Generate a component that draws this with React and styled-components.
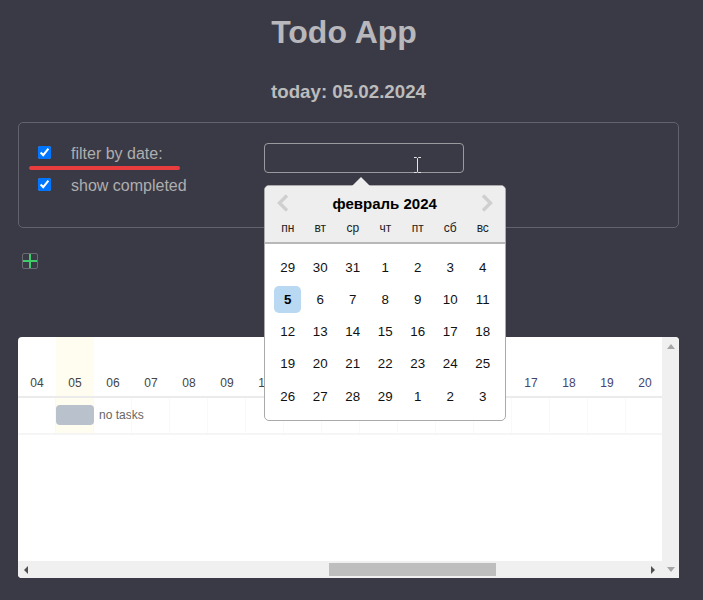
import React from 'react';
import styled, { createGlobalStyle } from 'styled-components';

const Global = createGlobalStyle`
  html, body { margin: 0; padding: 0; background: #3a3a46; }
  body { font-family: "Liberation Sans", Arial, sans-serif; }
`;
const Page = styled.div`
  width: 703px; height: 600px; box-sizing: border-box; overflow: hidden;
  padding: 14px 24px 0 18px; background: #3a3a46;
`;
const Title = styled.h1`
  margin: 0; padding-right: 9px; text-align: center;
  font-size: 32px; line-height: 37px; font-weight: 700; color: #b7b7bc;
`;
const Today = styled.h2`
  margin: 30px 0 0; text-align: center;
  font-size: 18.72px; line-height: 21px; font-weight: 700; color: #bcbcbc;
`;
const FilterPanel = styled.section`
  position: relative; box-sizing: border-box; height: 106px; margin-top: 20px;
  padding: 14px 0 0 19px; border: 1px solid #62626c; border-radius: 5px;
  display: grid; grid-template-columns: 226px 200px; align-items: start;
`;
const Options = styled.div`display: flex; flex-direction: column;`;
const Option = styled.label`
  height: 32px; box-sizing: border-box; padding-top: 2px; display: flex; align-items: center; gap: 20px;
  font-size: 16px; color: #aeaeae;
`;
const Check = styled.input`width: 13px; height: 13px; margin: 0 0 3px; flex: none;`;
const Underline = styled.div`
  position: absolute; left: 10px; top: 43px; width: 151px; height: 4px;
  border-radius: 2px; background: #e83c3f;
`;
const DateField = styled.div`position: relative; margin-top: 6px;`;
const DateInput = styled.input`
  display: block; box-sizing: border-box; width: 200px; height: 30px; padding: 0 8px;
  background: transparent; border: 1px solid #9a9a9e; border-radius: 4px;
`;
const Cursor = styled.svg`position: absolute; left: 150px; top: 14px;`;
const Popup = styled.div`
  position: absolute; z-index: 5; left: 0; top: 42px; width: 242px; height: 236px;
  box-sizing: border-box; border: 1px solid #aaa; border-radius: 5px; background: #fff;
  &::before {
    content: ""; position: absolute; left: 87px; top: -9px;
    border-left: 9px solid transparent; border-right: 9px solid transparent;
    border-bottom: 9px solid #eee;
  }
`;
const PopupHead = styled.div`
  height: 58px; box-sizing: border-box; padding: 6px 7px 0 6.5px; background: #eee;
  border-bottom: 2px solid #b8b8b8; border-radius: 4px 4px 0 0;
`;
const MonthRow = styled.div`
  height: 22px; padding: 0 4px; display: flex; align-items: center; justify-content: space-between;
`;
const Month = styled.div`font-size: 15px; font-weight: 700; color: #000;`;
const WeekRow = styled.div`
  margin-top: 6px; display: grid; grid-template-columns: repeat(7, 32.5px);
`;
const WeekDay = styled.div`
  text-align: center; font-size: 12px; line-height: 16px; color: #222;
`;
const DaysGrid = styled.div`
  padding: 7px 7px 0 6.5px; display: grid;
  grid-template-columns: repeat(7, 32.5px); grid-auto-rows: 32.25px;
`;
const Day = styled.div`
  display: flex; align-items: center; justify-content: center;
  font-size: 13.33px; color: #111;
`;
const Selected = styled.span`
  width: 27px; height: 27px; border-radius: 5px; background: #b9d8f2;
  display: flex; align-items: center; justify-content: center;
  font-weight: 700; color: #000;
`;
const AddButton = styled.button`
  display: block; box-sizing: border-box; width: 16px; height: 16px; margin: 25px 0 0 4px;
  padding: 0; background: transparent; border: 1px solid #6a6a72; border-radius: 2px;
`;
const Timeline = styled.section`
  margin-top: 68px; width: 661px; height: 241px; background: #fff; overflow: hidden;
  border-radius: 4px 4px 0 4px;
  display: grid; grid-template-columns: 644px 17px; grid-template-rows: 224px 17px;
`;
const Board = styled.div`overflow: hidden;`;
const HeadRow = styled.div`
  display: flex; height: 61px; box-sizing: border-box; border-bottom: 2px solid #ebebeb;
`;
const HeadCell = styled.div`
  flex: none; width: 38px; box-sizing: border-box; padding-top: 39px; text-align: center;
  font-size: 12px; line-height: 14px; color: ${p => (p.$late ? '#44446e' : '#444')};
  background: ${p => (p.$today ? '#fffcf0' : 'transparent')};
`;
const TaskRow = styled.div`
  display: flex; height: 37px; box-sizing: border-box; border-bottom: 2px solid #f5f5f5;
`;
const TaskCell = styled.div`
  flex: none; width: 38px; box-sizing: border-box; border-right: 1px solid #f9f9f9;
  padding-bottom: 1px;
  background: ${p => (p.$today ? '#fffcf0' : 'transparent')};
  display: flex; align-items: center; white-space: nowrap;
`;
const TaskBar = styled.div`
  flex: none; width: 38px; height: 20px; border-radius: 4px; background: #b8c1cc;
`;
const TaskLabel = styled.span`
  margin-left: 5px; font-size: 12px; color: #666;
`;
const VTrack = styled.div`
  background: #f0f0f0; display: flex; justify-content: center; padding-top: 7px;
`;
const HTrack = styled.div`
  background: #f0f0f0; display: flex; align-items: center; padding: 0 7px 0 6px;
`;
const Thumb = styled.div`
  width: 167px; height: 13px; margin-left: 301px; margin-right: auto; background: #bebebe;
`;
const Corner = styled.div`
  background: #f0f0f0; display: flex; justify-content: center; align-items: center;
`;

const weekDays = ['пн', 'вт', 'ср', 'чт', 'пт', 'сб', 'вс'];
const days = [29,30,31,1,2,3,4,5,6,7,8,9,10,11,12,13,14,15,16,17,18,19,20,21,22,23,24,25,26,27,28,29,1,2,3];
const columns = Array.from({ length: 17 }, (_, i) => String(i + 4).padStart(2, '0'));

const Chevron = ({ dir }) => (
  <svg width="14" height="18" viewBox="0 0 14 18">
    <path d={dir === 'left' ? 'M11 1.5 3.5 9l7.5 7.5' : 'M3 1.5 10.5 9 3 16.5'}
      fill="none" stroke="#cfcfcf" strokeWidth="3.4" />
  </svg>
);

export default function App() {
  return (
    <Page>
      <Global />
      <Title>Todo App</Title>
      <Today>today: 05.02.2024</Today>
      <FilterPanel>
        <Options>
          <Option><Check type="checkbox" defaultChecked />filter by date:</Option>
          <Option><Check type="checkbox" defaultChecked />show completed</Option>
        </Options>
        <Underline />
        <DateField>
          <DateInput type="text" />
          <Cursor width="7" height="16" viewBox="0 0 7 16">
            <path d="M0 .5h2.5l1 1 1-1H7M3.5 1.5v13M0 15.5h2.5l1-1 1 1H7" fill="none" stroke="#e4e4e4" strokeWidth="1" />
          </Cursor>
          <Popup>
            <PopupHead>
              <MonthRow>
                <Chevron dir="left" />
                <Month>февраль 2024</Month>
                <Chevron dir="right" />
              </MonthRow>
              <WeekRow>
                {weekDays.map(d => <WeekDay key={d}>{d}</WeekDay>)}
              </WeekRow>
            </PopupHead>
            <DaysGrid>
              {days.map((d, i) => (
                <Day key={i}>{i === 7 ? <Selected>{d}</Selected> : d}</Day>
              ))}
            </DaysGrid>
          </Popup>
        </DateField>
      </FilterPanel>
      <AddButton aria-label="add">
        <svg width="14" height="14" viewBox="0 0 14 14" style={{ display: 'block' }}>
          <path d="M7 0v14M0 7h14" stroke="#3ecb69" strokeWidth="2" />
        </svg>
      </AddButton>
      <Timeline>
        <Board>
          <HeadRow>
            {columns.map((c, i) => <HeadCell key={c} $today={i === 1} $late={i > 12}>{c}</HeadCell>)}
          </HeadRow>
          <TaskRow>
            {columns.map((c, i) => (
              <TaskCell key={c} $today={i === 1}>
                {i === 1 && <><TaskBar /><TaskLabel>no tasks</TaskLabel></>}
              </TaskCell>
            ))}
          </TaskRow>
        </Board>
        <VTrack>
          <svg width="8" height="5" viewBox="0 0 8 5"><path d="M4 0 8 5H0z" fill="#a6a6a6" /></svg>
        </VTrack>
        <HTrack>
          <svg width="4" height="8" viewBox="0 0 4 8" style={{ flex: 'none' }}><path d="M4 0v8L0 4z" fill="#505050" /></svg>
          <Thumb />
          <svg width="4" height="8" viewBox="0 0 4 8" style={{ flex: 'none' }}><path d="M0 0v8l4-4z" fill="#505050" /></svg>
        </HTrack>
        <Corner>
          <svg width="8" height="5" viewBox="0 0 8 5"><path d="M0 0h8L4 5z" fill="#a6a6a6" /></svg>
        </Corner>
      </Timeline>
    </Page>
  );
}
